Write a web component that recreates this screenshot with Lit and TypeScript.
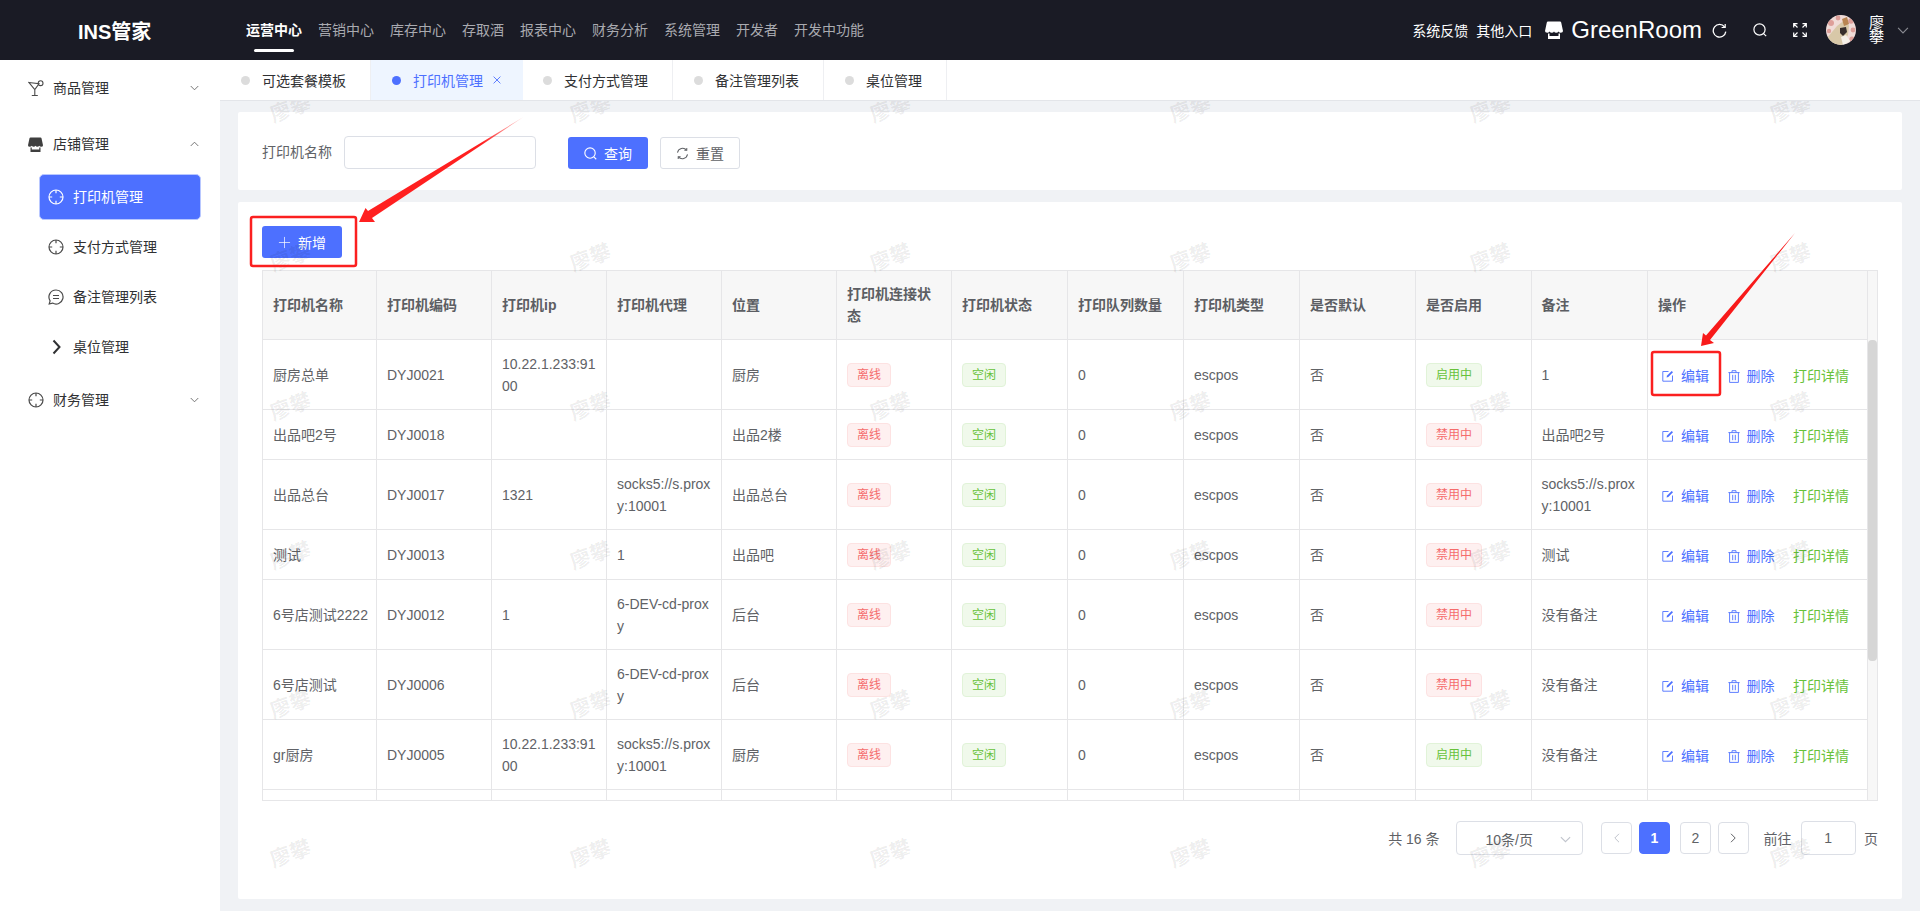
import { LitElement, html, css, svg } from "lit";
import { customElement } from "lit/decorators.js";

const crosshair = (extra = "") => html`<svg class="mi ${extra}" viewBox="0 0 16 16" fill="none" stroke="currentColor" stroke-width="1.2"><circle cx="8" cy="8" r="7"/><path d="M8 1v3.2M8 11.8V15M1 8h3.2M11.8 8H15"/></svg>`;
const chevDown = html`<svg class="chev" viewBox="0 0 10 6" fill="none" stroke="currentColor" stroke-width="1"><path d="M.8.8 5 5l4.2-4.2"/></svg>`;
const chevUp = html`<svg class="chev" viewBox="0 0 10 6" fill="none" stroke="currentColor" stroke-width="1"><path d="M.8 5.2 5 1l4.2 4.2"/></svg>`;
const shop = (c: string) => html`<svg class="shop" viewBox="0 0 18 18" fill="${c}"><path d="M3 .5h12q1 0 1.2 1L18 10q0 1.8-2.2 1.8-1.6 0-2.3-1.3-.7 1.3-2.3 1.3T9 10.5q-.7 1.3-2.2 1.3T4.5 10.5Q3.8 11.8 2.2 11.8 0 11.8 0 10l1.8-8.5Q2 .5 3 .5z"/><path d="M3 12.5h1.5V15h9v-2.5H15V18H3z"/></svg>`;
const searchIcon = html`<svg class="ic14" viewBox="0 0 14 14" fill="none" stroke="currentColor" stroke-width="1.2"><circle cx="6.5" cy="6.5" r="5.6"/><path d="m10.6 10.6 2.6 2.6"/></svg>`;
const editIcon = html`<svg class="ic12" viewBox="0 0 12 12" fill="none" stroke="currentColor" stroke-width=".9"><path d="M6.5 1.5H.8v9.7h9.7V5.5"/><path d="M4.6 7.4 4.9 5.7 9.7 1l1.3 1.3-4.7 4.8z" fill="currentColor" stroke="none"/></svg>`;
const delIcon = html`<svg class="ic13" viewBox="0 0 12 13" fill="none" stroke="currentColor" stroke-width=".9"><path d="M.4 2.6h11.2M4 2.5V.7h4v1.8M1.6 2.6v9.8h8.8V2.6M4.7 4.8v5.4M7.3 4.8v5.4"/></svg>`;

const data: [string, string, string, string, string, boolean, string, boolean][] = [
  ["厨房总单", "DYJ0021", "10.22.1.233:9100", "", "厨房", true, "1", true],
  ["出品吧2号", "DYJ0018", "", "", "出品2楼", false, "出品吧2号", false],
  ["出品总台", "DYJ0017", "1321", "socks5://s.proxy:10001", "出品总台", false, "socks5://s.proxy:10001", true],
  ["测试", "DYJ0013", "", "1", "出品吧", false, "测试", false],
  ["6号店测试2222", "DYJ0012", "1", "6-DEV-cd-proxy", "后台", false, "没有备注", true],
  ["6号店测试", "DYJ0006", "", "6-DEV-cd-proxy", "后台", false, "没有备注", true],
  ["gr厨房", "DYJ0005", "10.22.1.233:9100", "socks5://s.proxy:10001", "厨房", true, "没有备注", true],
];
const heads = ["打印机名称", "打印机编码", "打印机ip", "打印机代理", "位置", "打印机连接状态", "打印机状态", "打印队列数量", "打印机类型", "是否默认", "是否启用", "备注", "操作"];
const navs = ["营销中心", "库存中心", "存取酒", "报表中心", "财务分析", "系统管理", "开发者", "开发中功能"];
const tabs = [
  { t: "可选套餐模板" },
  { t: "打印机管理", a: true },
  { t: "支付方式管理" },
  { t: "备注管理列表" },
  { t: "桌位管理" },
];

const colClass = ["c1", "c2", "c2", "c2", "c2", "c2", "c3", "c3", "c3", "c3", "c4", "c5", "co"];
const cols = html`<colgroup>${colClass.map((c) => html`<col class=${c} />`)}</colgroup>`;

@customElement("app-root")
export class AppRoot extends LitElement {
  static styles = css`
    :host { display: block; position: relative; width: 1920px; height: 911px; overflow: hidden; background: #f0f2f5; font-family: "Liberation Sans", "Noto Sans CJK SC", sans-serif; font-size: 14px; color: #303133; }
    * { box-sizing: border-box; }
    svg { display: block; flex: none; }
    .top { height: 60px; background: #1a1b25; display: flex; align-items: center; color: #fff; }
    .logo { width: 246px; padding-left: 78px; font-size: 20px; font-weight: 700; flex: none; }
    .nav { display: flex; gap: 16px; height: 60px; }
    .nav div { position: relative; line-height: 60px; color: #a9aab0; white-space: nowrap; }
    .nav .on { color: #fff; font-weight: 700; }
    .nav .on::after { content: ""; position: absolute; left: 8px; right: 8px; top: 49px; height: 3px; border-radius: 2px; background: #fff; }
    .tr { margin-left: auto; display: flex; align-items: center; padding-right: 11px; white-space: nowrap; flex: none; }
    .sp { margin-left: 8px; }
    .shop { width: 18px; height: 18px; margin: 0 8px 0 13px; }
    .sb .shop { width: 15px; height: 15px; margin: 0 1px 0 0; }
    .gr { font-size: 24px; margin-right: 10px; }
    .ic15 { width: 15px; height: 15px; }
    .ic14 { width: 14px; height: 14px; }
    .tr .ic14 { margin-left: 26px; }
    .avatar { width: 30px; height: 30px; margin: 0 13px 0 19px; }
    .name { width: 15px; font-size: 15px; line-height: 14px; margin-right: 13px; white-space: normal; word-break: break-all; }
    .tr .chev { width: 12px; height: 7px; color: #8a8b92; }
    .body { display: flex; height: 851px; }
    .sb { width: 220px; flex: none; background: #fff; }
    .sb span { margin-bottom: 2px; }
    .m1 { height: 56px; display: flex; align-items: center; padding-left: 28px; gap: 9px; }
    .m1 .chev { margin-left: auto; margin-right: 21px; }
    .chev { width: 9px; height: 6px; color: #666; }
    .mi { width: 16px; height: 16px; color: #4a4a4a; }
    .m2 { height: 50px; display: flex; align-items: center; padding-left: 48px; gap: 9px; }
    .m2.on { margin: 2px 19px 2px 39px; height: 46px; padding-left: 8px; background: #4d70ff; border: 1px solid #b9c8ff; border-radius: 5px; color: #fff; }
    .m2.on .mi { color: #fff; }
    .chv2 { width: 16px; height: 16px; color: #303133; }
    .main { flex: 1; min-width: 0; position: relative; overflow: hidden; display: flex; flex-direction: column; }
    .tabs { height: 41px; flex: none; background: #fff; border-bottom: 1px solid #e3e5e9; display: flex; }
    .tab { height: 40px; display: flex; align-items: center; padding: 0 24px 0 21px; border-right: 1px solid #eeeff2; white-space: nowrap; }
    .tab i { width: 9px; height: 9px; border-radius: 50%; background: #dcdcdc; margin-right: 12px; }
    .tab.a { background: #eef5ff; color: #4d70ff; border-right: none; padding-right: 22px; }
    .tab.a + .tab { padding-left: 20px; }
    .tab.a i { background: #4d70ff; }
    .x { margin-left: 10px; width: 8px; height: 8px; color: #4d70ff; }
    .content { padding: 11px 18px 0; display: flex; flex-direction: column; gap: 12px; }
    .card { background: #fff; border-radius: 2px; }
    .search { height: 78px; padding: 24px 24px 0; display: flex; align-items: flex-start; }
    .lab { line-height: 33px; color: #606266; width: 82px; }
    .inp { width: 192px; height: 33px; border: 1px solid #dcdfe6; border-radius: 4px; background: #fff; margin-right: 32px; }
    .btn { width: 80px; height: 32px; display: flex; align-items: center; justify-content: center; gap: 7px; border-radius: 3px; background: #4d70ff; color: #fff; flex: none; }
    .search .btn { margin-top: 1px; }
    .search .btn.pl { border: 1px solid #dcdfe6; background: #fff; color: #606266; margin-left: 12px; }
    .btn .ic14 { width: 13px; height: 13px; }
    .list { height: 697px; padding: 24px 24px 0; }
    .tbl { margin-top: 12px; height: 531px; border: 1px solid #e6e6e8; display: flex; flex-direction: column; color: #606266; }
    .hd { display: flex; background: #f7f7f7; flex: none; }
    .bd { display: flex; height: 460px; overflow: hidden; }
    table { border-collapse: separate; border-spacing: 0; table-layout: fixed; width: 1605px; flex: none; }
    .c1 { width: 114px; } .c2 { width: 115px; } .c3 { width: 116px; } .c4 { width: 115.5px; } .c5 { width: 116.5px; } .co { width: 220px; }
    th, td { padding: 0 10px; border-right: 1px solid #e6e6e8; border-bottom: 1px solid #e6e6e8; text-align: left; line-height: 22px; word-break: break-all; font-size: 14px; vertical-align: middle; }
    th:first-child, td:first-child { padding-right: 8px; }
    th { height: 69px; font-weight: 700; color: #5c5e63; }
    tr.t td { height: 70px; }
    tr.s td { height: 50px; }
    .gut { width: 9px; flex: none; background: #f7f7f7; position: relative; }
    .thumb { position: absolute; left: 0; top: 0; width: 9px; height: 321px; border-radius: 4px; background: #d6d6d6; }
    .tag { display: inline-block; height: 24px; line-height: 22px; padding: 0 9px; font-size: 12px; border: 1px solid; border-radius: 4px; vertical-align: middle; white-space: nowrap; }
    .red { background: #fef0f0; border-color: #fde2e2; color: #f56c6c; }
    .grn { background: #f0f9eb; border-color: #e1f3d8; color: #67c23a; }
    .ops { display: flex; align-items: center; gap: 18.5px; padding: 3px 0 0 4px; white-space: nowrap; color: #4d70ff; }
    .ops span { display: flex; align-items: center; gap: 7px; }
    .ic12 { width: 12px; height: 12px; }
    .ic13 { width: 12px; height: 13px; }
    .ops .g { color: #67c23a; }
    .pg { display: flex; align-items: center; justify-content: flex-end; margin-top: 20px; height: 34px; color: #606266; }
    .sel { width: 127.5px; height: 34px; margin: 0 18px 0 16px; border: 1px solid #dcdfe6; border-radius: 4px; display: flex; align-items: center; padding: 2px 11px 0 29px; }
    .sel .chev { margin-left: auto; width: 11px; height: 7px; color: #c0c4cc; }
    .pb { width: 31px; height: 32px; border: 1px solid #dcdfe6; border-radius: 4px; display: flex; align-items: center; justify-content: center; }
    .pb.n { background: #4d70ff; border-color: #4d70ff; color: #fff; font-weight: 700; margin: 0 10px 0 7px; }
    .pb.nx { margin: 0 15px 0 6.5px; }
    .pb svg { width: 6px; height: 10px; }
    .pb.dis { color: #c0c4cc; }
    .goto { width: 55.5px; height: 34px; margin: 0 8px 0 9px; border: 1px solid #dcdfe6; border-radius: 4px; text-align: center; line-height: 32px; }
    .wm { position: absolute; left: 0; top: 41px; right: 0; bottom: 0; overflow: hidden; pointer-events: none; }
    .wmg { position: absolute; left: -80px; top: -69px; display: grid; grid-template-columns: repeat(6, 300px); grid-auto-rows: 149px; align-items: center; justify-items: center; }
    .wmg span { font-size: 21px; font-weight: 700; color: rgba(0, 0, 0, 0.075); transform: rotate(-20deg); white-space: nowrap; }
    .ann { position: absolute; left: 0; top: 0; width: 1920px; height: 911px; pointer-events: none; }
  `;

  private row(r: (typeof data)[number]) {
    return html`<tr class=${r[7] ? "t" : "s"}>
      <td>${r[0]}</td><td>${r[1]}</td><td>${r[2]}</td><td>${r[3]}</td><td>${r[4]}</td>
      <td><span class="tag red">离线</span></td>
      <td><span class="tag grn">空闲</span></td>
      <td>0</td><td>escpos</td><td>否</td>
      <td><span class="tag ${r[5] ? "grn" : "red"}">${r[5] ? "启用中" : "禁用中"}</span></td>
      <td>${r[6]}</td>
      <td><div class="ops"><span>${editIcon}编辑</span><span>${delIcon}删除</span><span class="g">打印详情</span></div></td>
    </tr>`;
  }

  render() {
    return html`
      <div class="top">
        <div class="logo">INS管家</div>
        <div class="nav"><div class="on">运营中心</div>${navs.map((n) => html`<div>${n}</div>`)}</div>
        <div class="tr">
          <span>系统反馈</span><span class="sp">其他入口</span>
          ${shop("#fff")}
          <span class="gr">GreenRoom</span>
          <svg class="ic15" viewBox="0 0 15 15" fill="none" stroke="#fff" stroke-width="1.3"><path d="M12.6 4A6.3 6.3 0 1 0 13.8 8.6"/><path d="M13.2.9v3.6H9.6" stroke-width="1.2"/></svg>
          ${searchIcon}
          <svg class="ic14" viewBox="0 0 14 14" fill="none" stroke="#fff" stroke-width="1.2"><path d="M.7 4.5V.7h3.8M.9.9l3.6 3.6M9.5.7h3.8v3.8M13.1.9 9.5 4.5M.7 9.5v3.8h3.8M.9 13.1l3.6-3.6M13.3 9.5v3.8H9.5M13.1 13.1 9.5 9.5"/></svg>
          <svg class="avatar" viewBox="0 0 30 30"><defs><clipPath id="av"><circle cx="15" cy="15" r="15"/></clipPath></defs><g clip-path="url(#av)"><rect width="30" height="30" fill="#f0dcd8"/><circle cx="5" cy="8" r="3" fill="#dd9f99"/><circle cx="12" cy="3" r="2.4" fill="#dd9f99"/><circle cx="25" cy="6" r="2.8" fill="#dd9f99"/><circle cx="27" cy="15" r="2.4" fill="#dd9f99"/><circle cx="26" cy="24" r="2.6" fill="#dd9f99"/><circle cx="3" cy="16" r="2.2" fill="#dd9f99"/><path d="M1 23 11 11 20 4l3 7-1 9-6 10H5z" fill="#d8c8a8"/><path d="M16 4l5-2 2 7-5 2z" fill="#b98552"/><path d="M14 13l6-1 1 5-4 4-3-3z" fill="#372e2c"/><path d="M15 22l5-2 4 6-7 4z" fill="#f5f0e8"/></g></svg>
          <div class="name">廖攀</div>
          ${chevDown}
        </div>
      </div>
      <div class="body">
        <div class="sb">
          <div class="m1">
            <svg class="mi" viewBox="0 0 16 16" fill="none" stroke="#4a4a4a" stroke-width="1.1"><path d="M1 2.5 11 3.8 6.8 9.5zM6.8 9.5v5.8M3.8 15.6h6"/><circle cx="12.6" cy="3.2" r="2.4"/></svg>
            <span>商品管理</span>${chevDown}
          </div>
          <div class="m1">${shop("#3f3f3f")}<span>店铺管理</span>${chevUp}</div>
          <div class="m2 on">${crosshair()}<span>打印机管理</span></div>
          <div class="m2">${crosshair()}<span>支付方式管理</span></div>
          <div class="m2"><svg class="mi" viewBox="0 0 16 16" fill="none" stroke="#4a4a4a" stroke-width="1.2"><path d="M8 1a7 7 0 1 1-3.4 13.1L1.2 15l.9-3.2A7 7 0 0 1 8 1zM5 6.5h6M5 9.5h6"/></svg><span>备注管理列表</span></div>
          <div class="m2"><svg class="chv2" viewBox="0 0 16 16" fill="none" stroke="currentColor" stroke-width="2"><path d="M5.5 1.5 11.5 8l-6 6.5"/></svg><span>桌位管理</span></div>
          <div class="m1">${crosshair()}<span>财务管理</span>${chevDown}</div>
        </div>
        <div class="main">
          <div class="tabs">
            ${tabs.map((t) => html`<div class="tab ${t.a ? "a" : ""}"><i></i>${t.t}${t.a ? html`<svg class="x" viewBox="0 0 8 8" fill="none" stroke="currentColor" stroke-width=".9"><path d="m.6.6 6.8 6.8M7.4.6.6 7.4"/></svg>` : ""}</div>`)}
          </div>
          <div class="content">
            <div class="card search">
              <div class="lab">打印机名称</div>
              <div class="inp"></div>
              <div class="btn">${searchIcon}查询</div>
              <div class="btn pl"><svg class="ic14" viewBox="0 0 14 14" fill="none" stroke="#606266" stroke-width="1.1"><path d="M1.6 6A5.6 5.6 0 0 1 11.4 3.4M12.4 8A5.6 5.6 0 0 1 2.6 10.6"/><path d="M11.6 1v2.6H9M2.4 13v-2.6H5"/></svg>重置</div>
            </div>
            <div class="card list">
              <div class="btn"><svg class="ic14" viewBox="0 0 14 14" stroke="rgba(255,255,255,.75)" stroke-width="1"><path d="M7 1v12M1 7h12"/></svg><span>新增</span></div>
              <div class="tbl">
                <div class="hd">
                  <table>${cols}<tr>${heads.map((h) => html`<th>${h}</th>`)}</tr></table>
                  <div class="gut"></div>
                </div>
                <div class="bd">
                  <table>${cols}
                    ${data.map((r) => this.row(r))}
                    <tr class="s">${heads.map(() => html`<td></td>`)}</tr>
                  </table>
                  <div class="gut"><div class="thumb"></div></div>
                </div>
              </div>
              <div class="pg">
                <span>共 16 条</span>
                <div class="sel"><span>10条/页</span>${chevDown}</div>
                <div class="pb dis"><svg viewBox="0 0 6 10" fill="none" stroke="currentColor"><path d="M5 .8.8 5 5 9.2"/></svg></div>
                <div class="pb n">1</div>
                <div class="pb">2</div>
                <div class="pb nx"><svg viewBox="0 0 6 10" fill="none" stroke="currentColor"><path d="m1 .8L5.2 5 1 9.2"/></svg></div>
                <span>前往</span>
                <div class="goto">1</div>
                <span>页</span>
              </div>
            </div>
          </div>
          <div class="wm"><div class="wmg">${Array.from({ length: 36 }, () => html`<span>廖攀</span>`)}</div></div>
        </div>
      </div>
      <svg class="ann" viewBox="0 0 1920 911">
        ${svg`<rect x="251" y="217" width="105" height="49" rx="2" fill="none" stroke="#fb2020" stroke-width="2.5"/>
        <rect x="1652" y="352" width="68" height="43" rx="2" fill="none" stroke="#fb2020" stroke-width="2.5"/>
        <defs><linearGradient id="fa1" x1="1" y1="0" x2="0" y2="1"><stop offset="0" stop-color="#ff2a2a" stop-opacity=".2"/><stop offset=".25" stop-color="#ff2020"/></linearGradient></defs>
        <path d="M523.5 117 372 218 375 222 359 222 365.5 208 368 211Z" fill="url(#fa1)"/>
        <path d="M1795 233 1710 340 1714 343 1701 346 1703 333 1706 335.5Z" fill="#f81a1a"/>`}
      </svg>
    `;
  }
}
